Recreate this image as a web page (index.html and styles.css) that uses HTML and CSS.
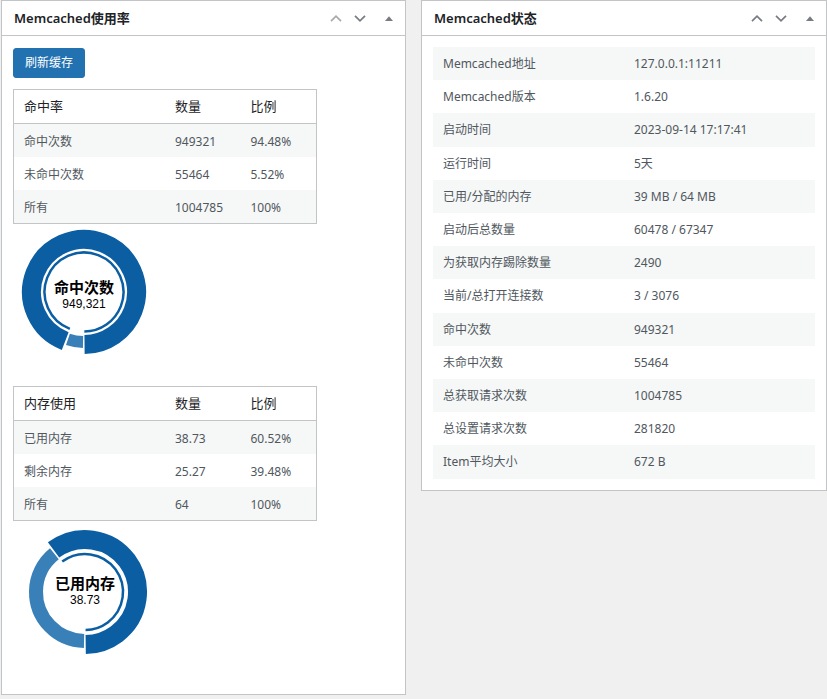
FILE: index.html
```html
<!DOCTYPE html>
<html lang="zh-CN">
<head>
<meta charset="utf-8">
<title>Memcached</title>
<link rel="stylesheet" href="styles.css">
</head>
<body>
<div class="dashboard">
  <div class="postbox postbox-left">
    <div class="postbox-header">
      <h2 class="postbox-title">Memcached使用率</h2>
      <div class="handle-actions">
        <span class="handle-btn handle-up is-disabled"><svg width="12" height="7" viewBox="0 0 12 7"><polyline points="1,6.2 6,1.2 11,6.2"/></svg></span>
        <span class="handle-btn handle-down"><svg width="12" height="7" viewBox="0 0 12 7"><polyline points="1,0.8 6,5.8 11,0.8"/></svg></span>
        <span class="handle-btn handle-toggle"><svg width="8" height="5" viewBox="0 0 8 5"><polygon points="0,5 4,0.3 8,5"/></svg></span>
      </div>
    </div>
    <div class="inside">
      <button class="button-primary" type="button">刷新缓存</button>
      <table class="usage-table">
        <colgroup><col class="col-name"><col class="col-num"><col class="col-num"></colgroup>
        <thead><tr><th>命中率</th><th>数量</th><th>比例</th></tr></thead>
        <tbody>
          <tr><td>命中次数</td><td>949321</td><td>94.48%</td></tr>
          <tr><td>未命中次数</td><td>55464</td><td>5.52%</td></tr>
          <tr><td>所有</td><td>1004785</td><td>100%</td></tr>
        </tbody>
      </table>
      <div class="donut donut-hit">
        <svg width="130" height="130" viewBox="0 0 130 130">
          <circle class="arc-main" cx="65" cy="65" r="52.5" stroke-dasharray="309.6 1000" transform="rotate(110.97 65 65)"/>
          <circle class="arc-rest" cx="65" cy="65" r="50" stroke-dasharray="15.42 1000" transform="rotate(91.1 65 65)"/>
          <circle class="arc-thin" cx="65" cy="65" r="39.5" stroke-dasharray="233 1000" transform="rotate(111 65 65)"/>
        </svg>
        <div class="donut-label"><div class="donut-title">命中次数</div><div class="donut-value">949,321</div></div>
      </div>
      <table class="usage-table usage-table-mem">
        <colgroup><col class="col-name"><col class="col-num"><col class="col-num"></colgroup>
        <thead><tr><th>内存使用</th><th>数量</th><th>比例</th></tr></thead>
        <tbody>
          <tr><td>已用内存</td><td>38.73</td><td>60.52%</td></tr>
          <tr><td>剩余内存</td><td>25.27</td><td>39.48%</td></tr>
          <tr><td>所有</td><td>64</td><td>100%</td></tr>
        </tbody>
      </table>
      <div class="donut donut-mem">
        <svg width="130" height="130" viewBox="0 0 130 130">
          <circle class="arc-main" cx="65" cy="65" r="52.5" stroke-dasharray="197.65 1000" transform="rotate(233.2 65 65)"/>
          <circle class="arc-rest" cx="65" cy="65" r="49" stroke-dasharray="119.7 1000" transform="rotate(91.1 65 65)"/>
          <circle class="arc-thin" cx="65" cy="65" r="38" stroke-dasharray="143 1000" transform="rotate(233.2 65 65)"/>
        </svg>
        <div class="donut-label"><div class="donut-title">已用内存</div><div class="donut-value">38.73</div></div>
      </div>
    </div>
  </div>

  <div class="postbox postbox-right">
    <div class="postbox-header">
      <h2 class="postbox-title">Memcached状态</h2>
      <div class="handle-actions">
        <span class="handle-btn handle-up"><svg width="12" height="7" viewBox="0 0 12 7"><polyline points="1,6.2 6,1.2 11,6.2"/></svg></span>
        <span class="handle-btn handle-down"><svg width="12" height="7" viewBox="0 0 12 7"><polyline points="1,0.8 6,5.8 11,0.8"/></svg></span>
        <span class="handle-btn handle-toggle"><svg width="8" height="5" viewBox="0 0 8 5"><polygon points="0,5 4,0.3 8,5"/></svg></span>
      </div>
    </div>
    <div class="inside">
      <table class="status-table">
        <tbody>
          <tr><td>Memcached地址</td><td>127.0.0.1:11211</td></tr>
          <tr><td>Memcached版本</td><td>1.6.20</td></tr>
          <tr><td>启动时间</td><td>2023-09-14 17:17:41</td></tr>
          <tr><td>运行时间</td><td>5天</td></tr>
          <tr><td>已用/分配的内存</td><td>39 MB / 64 MB</td></tr>
          <tr><td>启动后总数量</td><td>60478 / 67347</td></tr>
          <tr><td>为获取内存踢除数量</td><td>2490</td></tr>
          <tr><td>当前/总打开连接数</td><td>3 / 3076</td></tr>
          <tr><td>命中次数</td><td>949321</td></tr>
          <tr><td>未命中次数</td><td>55464</td></tr>
          <tr><td>总获取请求次数</td><td>1004785</td></tr>
          <tr><td>总设置请求次数</td><td>281820</td></tr>
          <tr><td>Item平均大小</td><td>672 B</td></tr>
        </tbody>
      </table>
    </div>
  </div>
</div>
</body>
</html>
```

FILE: styles.css
```css
html, body {
  margin: 0;
  padding: 0;
}

body {
  background: #f0f0f1;
  font-family: "Noto Sans", "Noto Sans CJK SC", sans-serif;
  color: #50575e;
}

.dashboard {
  display: flex;
  align-items: flex-start;
  gap: 15px;
  padding-left: 1px;
}

.postbox {
  background: #fff;
  border: 1px solid #c3c4c7;
  box-sizing: border-box;
}

.postbox-left {
  width: 405px;
  height: 695px;
}

.postbox-right {
  width: 406px;
}

.postbox-header {
  display: flex;
  align-items: center;
  height: 35px;
  box-sizing: border-box;
  border-bottom: 1px solid #c3c4c7;
}

.postbox-title {
  flex: 1;
  margin: 0;
  padding-left: 12px;
  font-size: 13px;
  line-height: 20px;
  font-weight: 600;
  color: #1d2327;
}

.handle-actions {
  display: flex;
  align-self: stretch;
}

.handle-btn {
  width: 24px;
  display: flex;
  align-items: center;
  justify-content: center;
}

.handle-toggle {
  width: 33px;
}

.handle-btn polyline {
  fill: none;
  stroke: #787c82;
  stroke-width: 1.7;
}

.handle-btn.is-disabled polyline {
  stroke: #a7aaad;
}

.handle-btn polygon {
  fill: #787c82;
}

.inside {
  padding: 12px 11px 11px;
}

.button-primary {
  display: block;
  height: 30px;
  padding: 0 11px;
  margin: 0 0 11px;
  background: #2271b1;
  border: 1px solid #2271b1;
  border-radius: 3px;
  color: #fff;
  font-family: "Noto Sans", "Noto Sans CJK SC", sans-serif;
  font-size: 12px;
  line-height: 28px;
}

.usage-table {
  width: 304px;
  border: 1px solid #c3c4c7;
  border-spacing: 0;
  table-layout: fixed;
}

.col-name {
  width: 50%;
}

.col-num {
  width: 25%;
}

.usage-table th {
  text-align: left;
  font-weight: 400;
  font-size: 13px;
  line-height: 19px;
  padding: 7px 10px;
  color: #1d2327;
  border-bottom: 1px solid #c3c4c7;
}

.usage-table td {
  font-size: 12px;
  line-height: 19px;
  padding: 8px 10px 6px;
  color: #50575e;
}

.usage-table tbody tr:nth-child(odd) td,
.status-table tbody tr:nth-child(odd) td {
  background: #f6f7f7;
}

.usage-table-mem {
  margin-top: 29px;
}

.donut {
  display: grid;
  width: 130px;
  height: 130px;
}

.donut > svg,
.donut > .donut-label {
  grid-area: 1 / 1;
}

.donut-hit {
  margin: 3px 0 0 6px;
}

.donut-mem {
  margin: 6px 0 0 7px;
}

.donut circle {
  fill: none;
}

.arc-main {
  stroke: #0c5ea3;
  stroke-width: 19;
}

.arc-rest {
  stroke: #3a80b8;
  stroke-width: 12;
}

.donut-mem .arc-rest {
  stroke-width: 14;
}

.arc-thin {
  stroke: #0c5ea3;
  stroke-width: 2.5;
}

.donut-label {
  align-self: center;
  justify-self: center;
  text-align: center;
  color: #000;
  font-family: "Liberation Sans", "Noto Sans CJK SC", sans-serif;
}

.donut-hit .donut-label {
  margin-top: 7px;
}

.donut-mem .donut-label {
  margin-bottom: 2px;
}

.donut-title {
  font-size: 15px;
  font-weight: 700;
  line-height: 18px;
}

.donut-value {
  font-size: 12px;
  line-height: 15px;
}

.status-table {
  width: 100%;
  border-spacing: 0;
  table-layout: fixed;
  margin-top: -1px;
}

.status-table td {
  width: 50%;
  font-size: 12px;
  line-height: 19.2px;
  padding: 7px 10px;
  color: #50575e;
}
```
